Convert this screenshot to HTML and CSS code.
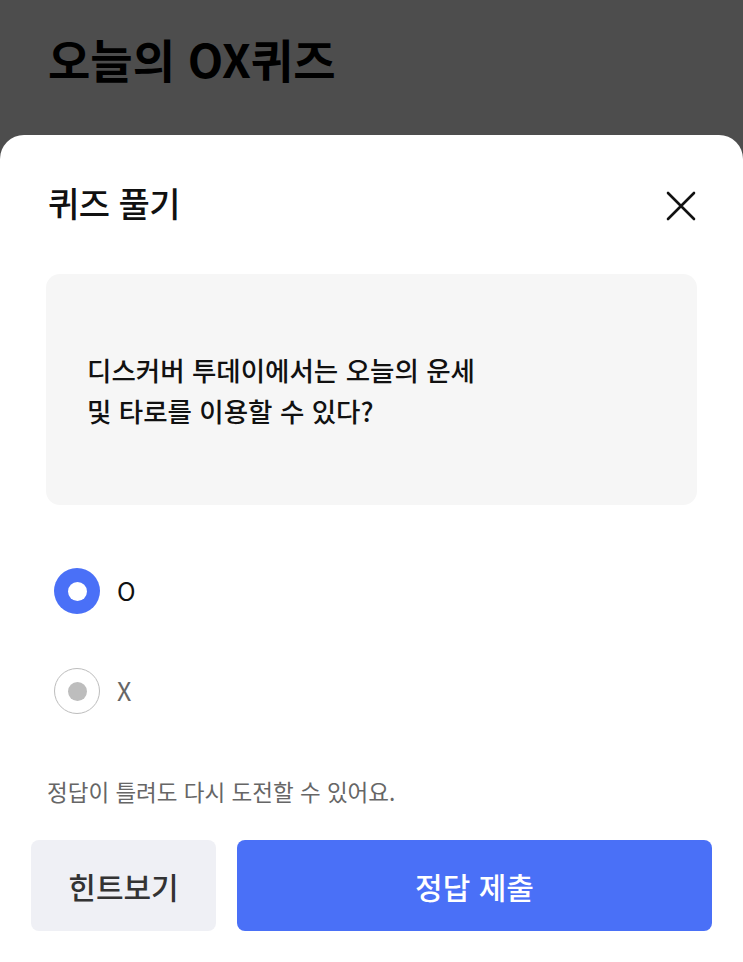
FILE: index.html
```html
<!DOCTYPE html>
<html lang="ko">
<head>
<meta charset="UTF-8">
<title>오늘의 OX퀴즈</title>
<link rel="stylesheet" href="styles.css">
</head>
<body>

<div class="page-header">
  <h1>오늘의 OX퀴즈</h1>
</div>

<div class="sheet">
  <div class="sheet-head">
    <h2>퀴즈 풀기</h2>
    <button type="button" class="close-btn" aria-label="닫기">
      <svg width="30" height="30" viewBox="0 0 30 30">
        <path d="M2 2 L28 28 M28 2 L2 28" stroke="#111" stroke-width="2.6" stroke-linecap="round" fill="none"/>
      </svg>
    </button>
  </div>

  <div class="question">
    <p>디스커버 투데이에서는 오늘의 운세<br>및 타로를 이용할 수 있다?</p>
  </div>

  <form class="answers">
    <label class="option">
      <input type="radio" name="answer" value="O" checked>
      <span class="radio"></span>
      <span class="option-text">O</span>
    </label>
    <label class="option">
      <input type="radio" name="answer" value="X">
      <span class="radio"></span>
      <span class="option-text">X</span>
    </label>
  </form>

  <p class="notice">정답이 틀려도 다시 도전할 수 있어요.</p>

  <div class="actions">
    <button type="button" class="btn btn-hint">힌트보기</button>
    <button type="button" class="btn btn-submit">정답 제출</button>
  </div>
</div>

</body>
</html>
```

FILE: styles.css
```css
body {
  margin: 0;
  padding: 0;
  background: #4d4d4d;
  font-family: "Noto Sans CJK KR", "Noto Sans", sans-serif;
  color: #111;
}

.page-header {
  height: 135px;
  padding: 31px 48px 0;
  box-sizing: border-box;
}

.page-header h1 {
  margin: 0;
  font-size: 46px;
  line-height: 54px;
  font-weight: 700;
  color: #000;
}

.sheet {
  background: #fff;
  border-radius: 24px 24px 0 0;
  padding: 46px 46px 31px 46px;
  min-height: 827px;
  box-sizing: border-box;
}

.sheet-head {
  display: flex;
  justify-content: space-between;
  align-items: center;
  height: 44px;
}

.sheet-head h2 {
  margin: 0 0 0 2px;
  font-size: 34px;
  line-height: 44px;
  font-weight: 500;
  letter-spacing: -0.5px;
}

.close-btn {
  background: none;
  border: none;
  padding: 0;
  margin: 6px 1px 0 0;
  width: 30px;
  height: 30px;
  cursor: pointer;
}

.question {
  margin-top: 49px;
  height: 231px;
  background: #f6f6f6;
  border-radius: 14px;
  padding: 0 41px;
  display: flex;
  align-items: center;
}

.question p {
  margin: 0;
  font-size: 26.5px;
  line-height: 41px;
  font-weight: 500;
  color: #111;
}

.answers {
  margin-top: 63px;
  display: flex;
  flex-direction: column;
  gap: 54px;
}

.option {
  display: flex;
  align-items: center;
  gap: 17px;
  height: 46px;
  margin-left: 8px;
  cursor: pointer;
}

.option input {
  display: none;
}

.radio {
  width: 46px;
  height: 46px;
  border-radius: 50%;
  box-sizing: border-box;
  border: 1.5px solid #bdbdbd;
  display: flex;
  align-items: center;
  justify-content: center;
}

.radio::after {
  content: "";
  width: 19px;
  height: 19px;
  border-radius: 50%;
  background: #bdbdbd;
}

.option input:checked + .radio {
  border: none;
  background: #4a70f7;
}

.option input:checked + .radio::after {
  background: #fff;
}

.option-text {
  font-size: 25px;
  line-height: 30px;
  margin-top: -3px;
  color: #666;
}

.option input:checked ~ .option-text {
  color: #111;
}

.notice {
  margin: 62px 0 0 1px;
  font-size: 22.5px;
  line-height: 30px;
  color: #666;
}

.actions {
  margin: 34px -15px 0;
  display: flex;
  gap: 21px;
}

.btn {
  height: 91px;
  border: none;
  border-radius: 8px;
  font-family: inherit;
  font-size: 30px;
  font-weight: 500;
  cursor: pointer;
}

.btn-hint {
  width: 185px;
  background: #eff0f5;
  color: #333;
}

.btn-submit {
  flex: 1;
  background: #4a70f7;
  color: #fff;
}
```
